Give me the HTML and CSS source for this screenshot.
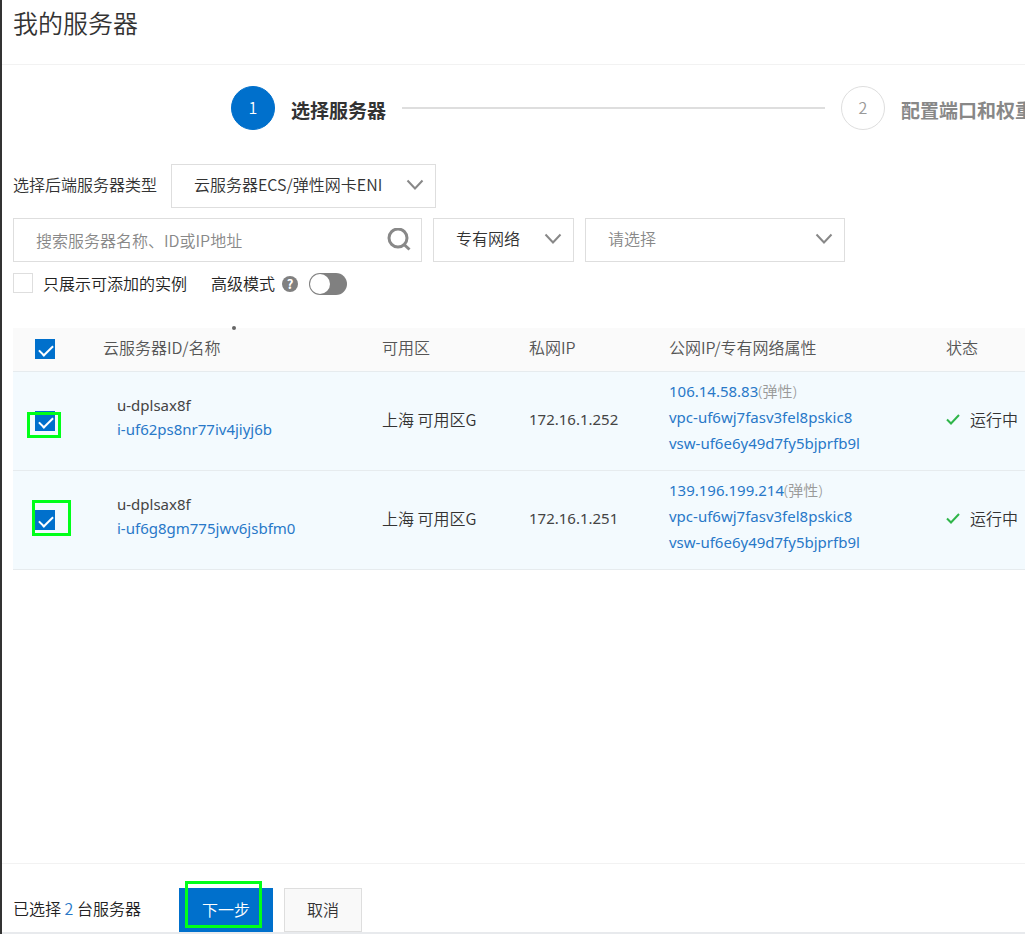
FILE: index.html
```html
<!DOCTYPE html>
<html lang="zh-CN">
<head>
  <meta charset="UTF-8" />
  <meta name="viewport" content="width=device-width, initial-scale=1" />
  <title>我的服务器</title>
  <link rel="stylesheet" href="styles.css">
</head>
<body>
  <header class="page-header">
    <h1>我的服务器</h1>
  </header>

  <main>
    <ol class="steps">
      <li class="step active"><span class="step-num">1</span><span class="step-title">选择服务器</span></li>
      <li class="step-line" aria-hidden="true"></li>
      <li class="step next"><span class="step-num">2</span><span class="step-title">配置端口和权重</span></li>
    </ol>

    <form class="filters">
      <div class="filter-row">
        <label class="type-label" for="serverType">选择后端服务器类型</label>
        <div class="select type-select">
          <select id="serverType"><option>云服务器ECS/弹性网卡ENI</option></select>
          <svg class="chevron" viewBox="0 0 18 12"><path d="M1.5 1.5 9 9.500l7.500-8" /></svg>
        </div>
      </div>

      <div class="filter-row">
        <div class="search">
          <input type="text" placeholder="搜索服务器名称、ID或IP地址" aria-label="搜索服务器">
          <button type="button" aria-label="搜索">
            <svg viewBox="0 0 24 24"><circle cx="11" cy="10" r="9" /><path d="M17 16.500 22.500 21.500" /></svg>
          </button>
        </div>
        <div class="select network-select">
          <select aria-label="网络类型"><option>专有网络</option></select>
          <svg class="chevron" viewBox="0 0 18 12"><path d="M1.5 1.5 9 9.500l7.500-8" /></svg>
        </div>
        <div class="select vpc-select placeholder">
          <select aria-label="专有网络"><option>请选择</option></select>
          <svg class="chevron" viewBox="0 0 18 12"><path d="M1.5 1.5 9 9.500l7.500-8" /></svg>
        </div>
      </div>

      <div class="filter-row options">
        <label class="only-label"><input type="checkbox" class="check"><span>只展示可添加的实例</span></label>
        <label for="advanced">高级模式</label>
        <span class="help">?</span>
        <input type="checkbox" class="switch" id="advanced">
      </div>
    </form>

    <div class="table-wrap">
      <span class="pointer-dot"></span>
      <table>
        <colgroup>
          <col class="col-check">
          <col class="col-name">
          <col class="col-zone">
          <col class="col-private">
          <col class="col-public">
          <col>
        </colgroup>
        <thead>
          <tr>
            <th class="cell-check"><input type="checkbox" class="check" aria-label="全选" checked></th>
            <th>云服务器ID/名称</th>
            <th>可用区</th>
            <th>私网IP</th>
            <th>公网IP/专有网络属性</th>
            <th>状态</th>
          </tr>
        </thead>
        <tbody>
          <tr>
            <td class="cell-check">
              <div class="marked"><input type="checkbox" class="check" aria-label="i-uf62ps8nr77iv4jiyj6b" checked><span class="mark mark-first"></span></div>
            </td>
            <td class="cell-name">u-dplsax8f<br><a href="#">i-uf62ps8nr77iv4jiyj6b</a></td>
            <td>上海 可用区G</td>
            <td class="cell-ip">172.16.1.252</td>
            <td class="cell-public">
              <div><a href="#">106.14.58.83</a><span class="muted">(弹性)</span></div>
              <div><a href="#">vpc-uf6wj7fasv3fel8pskic8</a></div>
              <div><a href="#">vsw-uf6e6y49d7fy5bjprfb9l</a></div>
            </td>
            <td><span class="status"><svg viewBox="0 0 14 12"><path d="m1 6.500 4 4L13 2" /></svg>运行中</span></td>
          </tr>
          <tr>
            <td class="cell-check">
              <div class="marked"><input type="checkbox" class="check" aria-label="i-uf6g8gm775jwv6jsbfm0" checked><span class="mark mark-second"></span></div>
            </td>
            <td class="cell-name">u-dplsax8f<br><a href="#">i-uf6g8gm775jwv6jsbfm0</a></td>
            <td>上海 可用区G</td>
            <td class="cell-ip">172.16.1.251</td>
            <td class="cell-public">
              <div><a href="#">139.196.199.214</a><span class="muted">(弹性)</span></div>
              <div><a href="#">vpc-uf6wj7fasv3fel8pskic8</a></div>
              <div><a href="#">vsw-uf6e6y49d7fy5bjprfb9l</a></div>
            </td>
            <td><span class="status"><svg viewBox="0 0 14 12"><path d="m1 6.500 4 4L13 2" /></svg>运行中</span></td>
          </tr>
        </tbody>
      </table>
    </div>
  </main>

  <footer class="page-footer">
    <span class="selected">已选择 <b>2</b> 台服务器</span>
    <div class="marked"><button type="button" class="btn btn-primary">下一步</button><span class="mark mark-next"></span></div>
    <button type="button" class="btn">取消</button>
  </footer>
</body>
</html>
```
FILE: styles.css
```css
:root {
  --color-primary: #0070cc;
  --color-link: #2878c8;
  --color-text: #333;
  --color-muted: #999;
  --color-border: #dedede;
  --color-mark: #00ff19;
  --font-family: "Noto Sans CJK SC", "Noto Sans", sans-serif;
  --weight: 350;
}

* { box-sizing: border-box; }

body {
  display: flex;
  flex-direction: column;
  min-height: 100vh;
  margin: 0;
  background: #fff;
  border-left: 2px solid #333;
  color: var(--color-text);
  font-family: var(--font-family);
  font-size: 16px;
  font-weight: var(--weight);
  line-height: 24px;
}

input, select, button {
  font: inherit;
  color: inherit;
}

a {
  color: var(--color-link);
  text-decoration: none;
}

svg {
  fill: none;
  stroke: #888;
  stroke-width: 2;
}

main { flex: 1; }

.page-header {
  height: 65px;
  padding: 4px 11px;
  border-bottom: 1px solid #f2f2f2;
}

h1 {
  margin: 0;
  font-size: 25px;
  font-weight: var(--weight);
  line-height: 36px;
}

/* steps */
.steps {
  display: flex;
  align-items: center;
  gap: 16px;
  margin: 21px 0 34px;
  padding: 0 0 0 229px;
  list-style: none;
}

.step {
  display: flex;
  align-items: center;
  gap: 16px;
  white-space: nowrap;
}

.step.next {
  flex: 0 0 184px;
  overflow: hidden;
}

.step-num {
  flex: none;
  width: 44px;
  height: 44px;
  border: 1px solid var(--color-border);
  border-radius: 50%;
  color: var(--color-muted);
  line-height: 40px;
  text-align: center;
}

.step.active .step-num {
  border-color: var(--color-primary);
  background: var(--color-primary);
  color: #fff;
}

.step-title {
  padding-top: 4px;
  font-size: 19px;
  font-weight: 700;
}

.next .step-title { color: #888; }

.step-line {
  flex: 1;
  height: 2px;
  background: var(--color-border);
}

/* filters */
.filters { padding: 0 11px; }

.filter-row {
  display: flex;
  align-items: center;
  gap: 11px;
  margin-bottom: 10px;
}

.type-label {
  width: 147px;
  padding-bottom: 4px;
}

.select {
  position: relative;
  height: 44px;
}

.select select {
  width: 100%;
  height: 100%;
  padding: 0 22px 4px;
  border: 1px solid var(--color-border);
  border-radius: 0;
  background: #fff;
  appearance: none;
}

.placeholder select { color: #888; }

.type-select { width: 265px; }
.network-select { width: 141px; }
.vpc-select { width: 260px; }

.chevron {
  position: absolute;
  top: 15px;
  right: 12px;
  width: 18px;
  height: 12px;
  pointer-events: none;
}

.search {
  display: flex;
  align-items: center;
  width: 409px;
  height: 44px;
  border: 1px solid var(--color-border);
}

.search input {
  flex: 1;
  min-width: 0;
  padding: 0 22px;
  border: 0;
  background: none;
}

.search input::placeholder { color: #888; }

.search button {
  width: 44px;
  height: 24px;
  padding: 0 10px;
  border: 0;
  background: none;
}

.search svg {
  display: block;
  width: 24px;
  height: 24px;
}

.search circle, .search path { stroke-width: 3; }

.options {
  gap: 4px;
  height: 24px;
  margin-bottom: 32px;
  color: #222;
}

.options label {
  padding-bottom: 2px;
}

.only-label {
  display: flex;
  align-items: center;
  gap: 10px;
  margin-right: 20px;
}

.check {
  display: block;
  position: relative;
  width: 20px;
  height: 20px;
  margin: 0;
  border: 1px solid var(--color-border);
  background: #fff;
  appearance: none;
}

.check:checked {
  border-color: var(--color-primary);
  background: var(--color-primary);
}

.check:checked::after {
  content: "";
  position: absolute;
  top: 5px;
  left: 3px;
  width: 12px;
  height: 6px;
  border: solid #fff;
  border-width: 0 0 2px 2px;
  transform: rotate(-45deg);
}

.help {
  width: 16px;
  height: 16px;
  margin: 0 7px 0 3px;
  border-radius: 50%;
  background: #808080;
  color: #fff;
  font-size: 13px;
  font-weight: 700;
  line-height: 16px;
  text-align: center;
}

.switch {
  position: relative;
  width: 38px;
  height: 22px;
  margin: 0;
  border-radius: 11px;
  background: #808080;
  appearance: none;
}

.switch::after {
  content: "";
  position: absolute;
  top: 1px;
  left: 1px;
  width: 20px;
  height: 20px;
  border-radius: 50%;
  background: #fff;
}

/* server table */
.table-wrap {
  position: relative;
  padding-left: 11px;
}

.pointer-dot {
  position: absolute;
  top: -2px;
  left: 230px;
  width: 4px;
  height: 4px;
  border-radius: 50%;
  background: #666;
}

table {
  width: 100%;
  border-collapse: collapse;
  table-layout: fixed;
}

.col-check { width: 79px; }
.col-name { width: 279px; }
.col-zone { width: 147px; }
.col-private { width: 140px; }
.col-public { width: 277px; }

th, td {
  padding: 0 0 4px 11px;
  border-bottom: 1px solid #e6ebee;
  text-align: left;
  white-space: nowrap;
}

th {
  height: 43px;
  background: #fafafa;
  color: #555;
  font-weight: var(--weight);
}

td {
  height: 99px;
  background: #f3fafe;
}

.cell-check { padding: 0 0 0 22px; }

.cell-name, .cell-public, .cell-ip {
  font-family: "Noto Sans", "Noto Sans CJK SC", sans-serif;
  font-size: 15px;
  font-weight: 400;
}

.cell-name { padding: 0 0 8px 25px; }

.cell-public {
  padding-bottom: 8px;
  line-height: 26px;
}

.cell-name, .cell-ip { color: #444; }

.muted {
  color: var(--color-muted);
  font-weight: var(--weight);
}

.status {
  display: flex;
  align-items: center;
  gap: 10px;
}

.status svg {
  width: 14px;
  height: 12px;
  stroke: #2fb54a;
}

/* highlight frames over controls */
.marked { position: relative; }

.mark {
  position: absolute;
  border: 3px solid var(--color-mark);
  pointer-events: none;
}

.mark-first {
  top: 1px;
  left: -8px;
  width: 34px;
  height: 26px;
}

.mark-second {
  top: -10px;
  left: -3px;
  width: 39px;
  height: 36px;
}

.mark-next {
  top: -7px;
  left: 6px;
  width: 77px;
  height: 47px;
}

.page-footer {
  display: flex;
  align-items: center;
  gap: 11px;
  padding: 24px 11px 0;
  border-top: 1px solid #f2f2f2;
  border-bottom: 2px solid #e8eaed;
}

.selected {
  width: 155px;
  padding-bottom: 4px;
  color: #222;
}

.selected b {
  color: var(--color-link);
  font-weight: var(--weight);
}

.btn {
  display: block;
  height: 44px;
  padding: 0 22px 2px;
  border: 1px solid var(--color-border);
  background: #f9f9f9;
}

.btn-primary {
  border-color: var(--color-primary);
  background: var(--color-primary);
  color: #fff;
}
```
